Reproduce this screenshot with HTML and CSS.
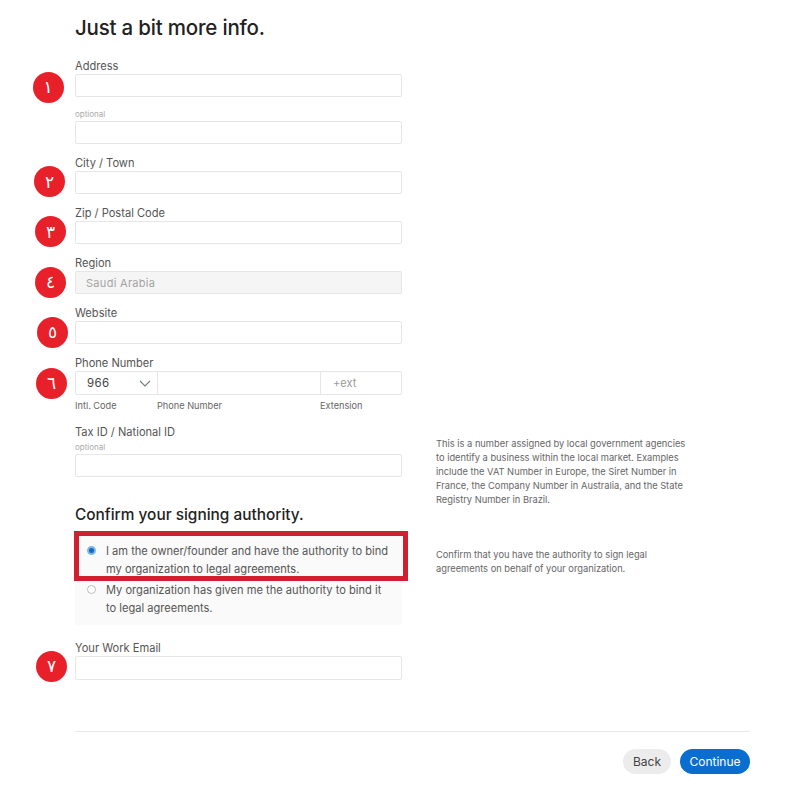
FILE: index.html
```html
<!DOCTYPE html>
<html lang="en">
<head>
	<meta charset="UTF-8">
	<title>Just a bit more info</title>
	<link rel="stylesheet" href="styles.css">
</head>
<body>
	<div class="page">
		<h1 class="title">Just a bit more info.</h1>

		<div class="field field--address">
			<label class="field--label">Address</label>
			<input class="field--input" type="text">
			<span class="badge badge--one">١</span>
		</div>
		<div class="field">
			<label class="field--hint field--hintTop">optional</label>
			<input class="field--input" type="text">
		</div>
		<div class="field">
			<label class="field--label">City / Town</label>
			<input class="field--input" type="text">
			<span class="badge badge--two">٢</span>
		</div>
		<div class="field">
			<label class="field--label">Zip / Postal Code</label>
			<input class="field--input" type="text">
			<span class="badge badge--three">٣</span>
		</div>
		<div class="field">
			<label class="field--label">Region</label>
			<input class="field--input field--inputDisabled" type="text" value="Saudi Arabia" disabled>
			<span class="badge badge--four">٤</span>
		</div>
		<div class="field">
			<label class="field--label">Website</label>
			<input class="field--input" type="text">
			<span class="badge badge--five">٥</span>
		</div>
		<div class="field">
			<label class="field--label">Phone Number</label>
			<div class="phone">
				<div class="phone--code">
					<span>966</span>
					<svg class="phone--arrow" viewBox="0 0 12 7" width="12" height="7">
						<path d="M1 1l5 5 5-5" fill="none" stroke="#6f7f88" stroke-width="1.1"/>
					</svg>
				</div>
				<div class="phone--number"></div>
				<div class="phone--ext">+ext</div>
			</div>
			<div class="phone phone--labels">
				<span class="phone--label phone--labelCode">Intl. Code</span>
				<span class="phone--label phone--labelNumber">Phone Number</span>
				<span class="phone--label">Extension</span>
			</div>
			<span class="badge badge--six">٦</span>
		</div>

		<div class="row row--tax">
			<div class="row--main">
				<label class="field--label field--labelTax">Tax ID / National ID</label>
				<label class="field--hint field--hintTax">optional</label>
				<input class="field--input" type="text">
			</div>
			<p class="note note--tax">This is a number assigned by local government agencies to identify a business within the local market. Examples include the VAT Number in Europe, the Siret Number in France, the Company Number in Australia, and the State Registry Number in Brazil.</p>
		</div>

		<h2 class="subtitle">Confirm your signing authority.</h2>

		<div class="row">
			<div class="row--main options">
				<div class="option">
					<span class="radio radio--checked"></span>
					<span>I am the owner/founder and have the authority to bind my organization to legal agreements.</span>
				</div>
				<div class="option">
					<span class="radio"></span>
					<span>My organization has given me the authority to bind it to legal agreements.</span>
				</div>
				<div class="highlight"></div>
			</div>
			<p class="note note--sign">Confirm that you have the authority to sign legal agreements on behalf of your organization.</p>
		</div>

		<div class="field field--email">
			<label class="field--label">Your Work Email</label>
			<input class="field--input" type="text">
			<span class="badge badge--seven">٧</span>
		</div>

		<div class="footer">
			<button class="button button--back">Back</button>
			<button class="button button--continue">Continue</button>
		</div>
	</div>
</body>
</html>
```

FILE: styles.css
```css
* {
	box-sizing: border-box;
}

body {
	margin: 0;
	background: #fff;
	font-family: Inter, "Liberation Sans", sans-serif;
	color: #555;
}

.page {
	width: 786px;
	height: 786px;
	padding: 14px 36px 0 75px;
	overflow: hidden;
}

.title {
	margin: 0 0 15px;
	height: 28px;
	font-size: 20.5px;
	line-height: 28px;
	font-weight: 500;
	letter-spacing: -0.2px;
	color: #222;
}

.field {
	position: relative;
	width: 327px;
	height: 50px;
}

.field--address {
	height: 47px;
}

.field--label {
	display: block;
	height: 17px;
	font-size: 11.1px;
	line-height: 18px;
	color: #555;
}

.field--hint {
	display: block;
	font-size: 8px;
	line-height: 10px;
	color: #aaa;
}

.field--hintTop {
	height: 17px;
	padding-top: 5px;
}

.field--hintTax {
	height: 15px;
	padding-top: 3px;
}

.field--input {
	display: block;
	width: 100%;
	height: 23px;
	margin: 0;
	padding: 0 10px;
	border: 1px solid #e6e6e6;
	border-radius: 2px;
	background: #fff;
	font-family: inherit;
	font-size: 11px;
}

.field--inputDisabled {
	background: #f5f5f5;
	color: #a3a3a3;
	letter-spacing: 0.3px;
}

.badge {
	position: absolute;
	display: flex;
	justify-content: center;
	align-items: center;
	width: 31px;
	height: 31px;
	border-radius: 50%;
	background: #e8202a;
	color: #fff;
	font-family: "DejaVu Sans", sans-serif;
	font-size: 17px;
}

.badge--one {
	left: -42.5px;
	top: 14.5px;
}

.badge--two {
	left: -41px;
	top: 12px;
}

.badge--three {
	left: -40px;
	top: 12px;
}

.badge--four {
	left: -40px;
	top: 12.5px;
}

.badge--five {
	left: -38px;
	top: 12.5px;
}

.badge--six {
	left: -39px;
	top: 13.5px;
}

.badge--seven {
	left: -39px;
	top: 11.5px;
}

.phone {
	display: flex;
	height: 24px;
	border: 1px solid #e6e6e6;
	border-radius: 2px;
	font-size: 11px;
}

.phone--code {
	display: flex;
	justify-content: space-between;
	align-items: center;
	width: 82px;
	padding: 0 6px 0 11px;
	border-right: 1px solid #e6e6e6;
	font-size: 11.5px;
	color: #444;
	letter-spacing: 0.4px;
}

.phone--number {
	flex: 1;
}

.phone--ext {
	width: 81px;
	padding-left: 12px;
	border-left: 1px solid #e6e6e6;
	line-height: 22px;
	color: #999;
}

.phone--labels {
	height: 22px;
	border: none;
	align-items: center;
}

.phone--label {
	font-size: 9.2px;
	line-height: 22px;
	color: #666;
}

.phone--labelCode {
	width: 82px;
}

.phone--labelNumber {
	width: 163px;
}

.row {
	display: flex;
	gap: 34px;
}

.row--tax {
	height: 54px;
	margin-top: 19px;
}

.row--main {
	position: relative;
	flex: none;
	width: 327px;
}

.field--labelTax {
	height: 16px;
}

.note {
	width: 256px;
	margin: 0;
	font-size: 9.3px;
	line-height: 14px;
	color: #666;
}

.note--tax {
	margin-top: 14px;
}

.note--sign {
	margin-top: 14px;
}

.subtitle {
	margin: 27px 0 10px;
	height: 20px;
	font-size: 15.4px;
	line-height: 22px;
	font-weight: 500;
	color: #222;
}

.options {
	display: flex;
	flex-direction: column;
	gap: 4px;
	height: 91px;
	padding-top: 9px;
	background: #fafafa;
	border-radius: 3px;
}

.option {
	display: flex;
	padding: 0 12px;
	gap: 10px;
	font-size: 11.1px;
	line-height: 17.5px;
	color: #555;
}

.radio {
	flex: none;
	width: 9px;
	height: 9px;
	margin-top: 2.5px;
	border: 1px solid #bbb;
	border-radius: 50%;
	background: #fff;
}

.radio--checked {
	border: 2px solid #7db8e6;
	background: #1368c0;
}

.highlight {
	position: absolute;
	left: -1px;
	top: -3px;
	width: 334px;
	height: 50px;
	border: 5px solid #cf2030;
}

.field--email {
	margin-top: 14px;
}

.field--email .field--input {
	height: 24px;
}

.footer {
	display: flex;
	justify-content: flex-end;
	gap: 9px;
	width: 675px;
	margin-top: 42px;
	padding-top: 17px;
	border-top: 1px solid #e8e8e8;
}

.button {
	height: 25px;
	padding: 0;
	border: none;
	border-radius: 13px;
	font-family: inherit;
	font-size: 12px;
}

.button--back {
	width: 48px;
	background: #ececec;
	color: #444;
}

.button--continue {
	width: 70px;
	background: #0a6ed1;
	color: #fff;
}
```
